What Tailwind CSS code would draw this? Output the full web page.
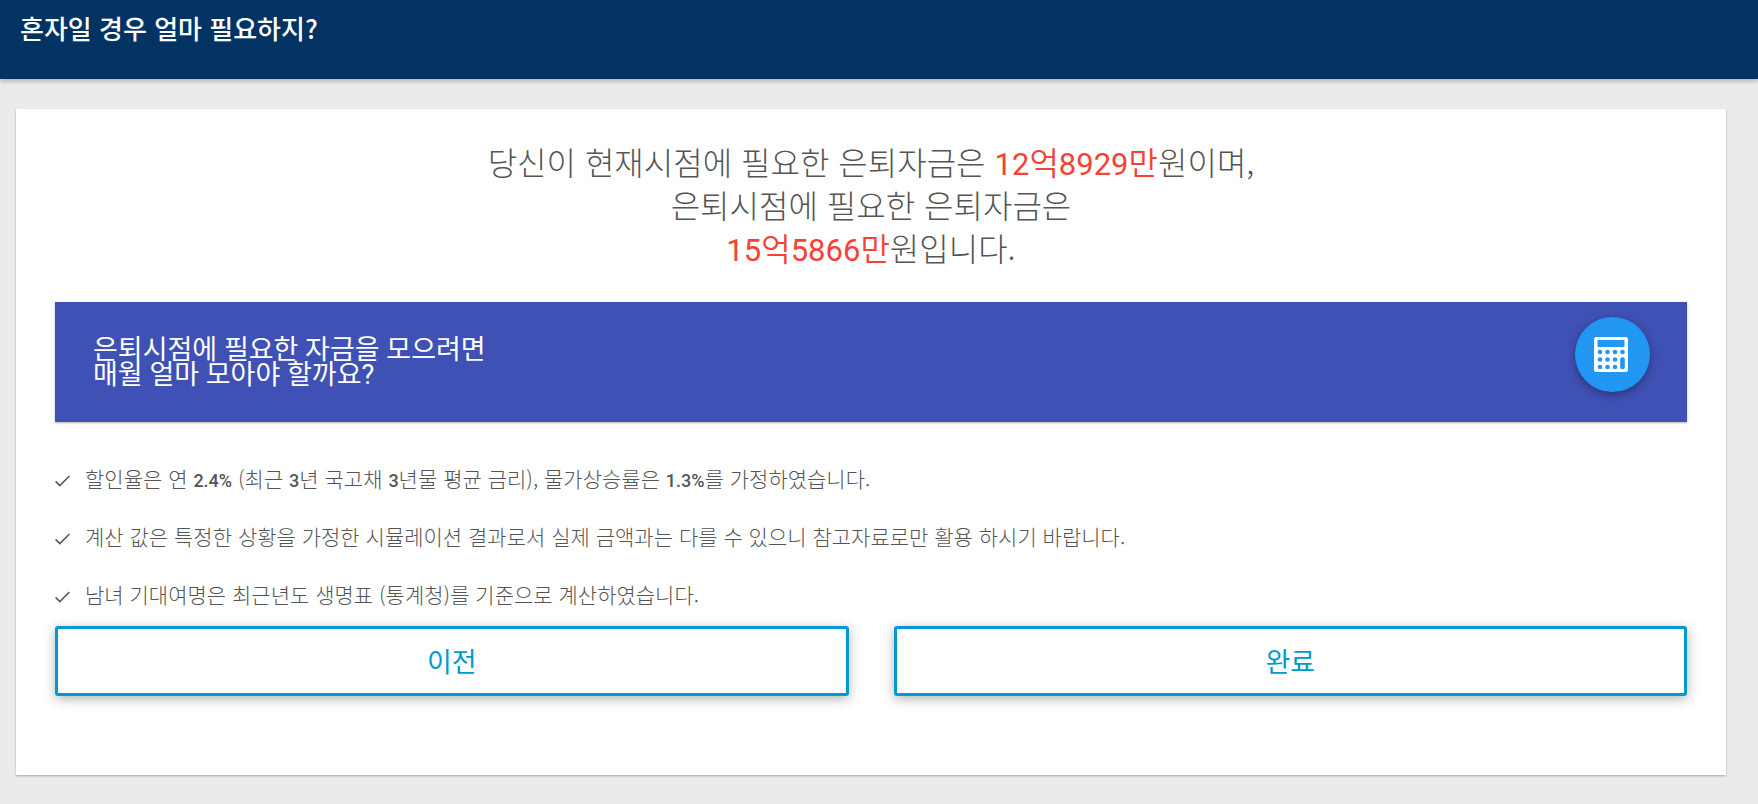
<!DOCTYPE html>
<html lang="ko">
<head>
<meta charset="utf-8">
<meta name="viewport" content="width=device-width, initial-scale=1">
<title>혼자일 경우 얼마 필요하지?</title>
<script src="https://cdn.jsdelivr.net/npm/@tailwindcss/browser@4"></script>
</head>
<body class="min-h-screen bg-[#ebebeb] font-['Noto_Sans_CJK_KR',sans-serif] text-[#555555]">
<header class="h-[79px] bg-[#033363] px-5 pt-1.5 text-white shadow-[0_2px_5px_rgba(0,0,0,0.26)]">
  <h1 class="text-[26px] leading-[44px] font-medium">혼자일 경우 얼마 필요하지?</h1>
</header>
<main class="mt-[30px] mr-8 mb-7 ml-4 bg-white px-[39px] pt-[31px] pb-[79px] shadow-[0_1px_2px_rgba(0,0,0,0.3)]">
  <p class="text-center text-[32px] leading-[43px] font-light">
    당신이 현재시점에 필요한 은퇴자금은 <span class="font-[350] text-[#f44336]"><span class="font-[Roboto] text-[31px] leading-none font-normal">12</span>억<span class="font-[Roboto] text-[31px] leading-none font-normal">8929</span>만</span>원이며,<br>
    은퇴시점에 필요한 은퇴자금은<br>
    <span class="font-[350] text-[#f44336]"><span class="font-[Roboto] text-[31px] leading-none font-normal">15</span>억<span class="font-[Roboto] text-[31px] leading-none font-normal">5866</span>만</span>원입니다.
  </p>
  <section class="mt-[33px] flex h-[120px] items-start justify-between bg-[#3f51b5] pr-[37px] pl-[38px] text-white shadow-[0_1px_2px_rgba(0,0,0,0.3)]">
    <h2 class="pt-9 font-[Roboto,'Noto_Sans_CJK_KR',sans-serif] text-[27px] leading-[25px] font-normal">은퇴시점에 필요한 자금을 모으려면<br>매월 얼마 모아야 할까요?</h2>
    <button type="button" aria-label="계산하기" class="mt-[15px] flex size-[75px] items-center justify-center rounded-full bg-[#2196f3] pr-[3px] shadow-[0_3px_10px_rgba(0,0,0,0.35)]">
      <svg class="h-[35px] w-[34px]" viewBox="0 0 34 35" aria-hidden="true">
        <rect width="34" height="35" rx="2.5" fill="#fff"/>
        <g fill="#2196f3">
          <rect x="3.5" y="3" width="27" height="7" rx="0.7"/>
          <circle cx="6" cy="15" r="2.3"/><circle cx="13.5" cy="15" r="2.3"/><circle cx="21" cy="15" r="2.3"/><circle cx="28.5" cy="15" r="2.3"/>
          <circle cx="6" cy="22.5" r="2.3"/><circle cx="13.5" cy="22.5" r="2.3"/><circle cx="21" cy="22.5" r="2.3"/>
          <circle cx="6" cy="30" r="2.3"/><circle cx="13.5" cy="30" r="2.3"/><circle cx="21" cy="30" r="2.3"/>
          <rect x="26.2" y="20.2" width="4.6" height="12" rx="2"/>
        </g>
      </svg>
    </button>
  </section>
  <ul class="mt-10 flex flex-col gap-[26px] text-[21px] leading-8 font-light">
    <li class="flex items-center gap-[15px]">
      <svg class="mt-1.5 h-3 w-[15px] shrink-0" viewBox="0 0 15 12" fill="none" stroke="#555" stroke-width="1.5" aria-hidden="true"><path d="M.6 6.4 4.8 10.6 14.4 1"/></svg>
      <span>할인율은 연 <span class="font-[Roboto] text-[18px] leading-none font-medium">2.4%</span> (최근 <span class="font-[Roboto] text-[18px] leading-none font-medium">3</span>년 국고채 <span class="font-[Roboto] text-[18px] leading-none font-medium">3</span>년물 평균 금리), 물가상승률은 <span class="font-[Roboto] text-[18px] leading-none font-medium">1.3%</span>를 가정하였습니다.</span>
    </li>
    <li class="flex items-center gap-[15px]">
      <svg class="mt-1.5 h-3 w-[15px] shrink-0" viewBox="0 0 15 12" fill="none" stroke="#555" stroke-width="1.5" aria-hidden="true"><path d="M.6 6.4 4.8 10.6 14.4 1"/></svg>
      <span>계산 값은 특정한 상황을 가정한 시뮬레이션 결과로서 실제 금액과는 다를 수 있으니 참고자료로만 활용 하시기 바랍니다.</span>
    </li>
    <li class="flex items-center gap-[15px]">
      <svg class="mt-1.5 h-3 w-[15px] shrink-0" viewBox="0 0 15 12" fill="none" stroke="#555" stroke-width="1.5" aria-hidden="true"><path d="M.6 6.4 4.8 10.6 14.4 1"/></svg>
      <span>남녀 기대여명은 최근년도 생명표 (통계청)를 기준으로 계산하였습니다.</span>
    </li>
  </ul>
  <div class="mt-4 grid grid-cols-2 gap-[45px] text-[27px] leading-none text-[#0099d0]">
    <button type="button" class="h-[70px] rounded-[3px] border-3 border-[#0099d0] bg-white pb-0.5 shadow-[0_3px_12px_rgba(0,0,0,0.3)]">이전</button>
    <button type="button" class="h-[70px] rounded-[3px] border-3 border-[#0099d0] bg-white pb-0.5 shadow-[0_3px_12px_rgba(0,0,0,0.3)]">완료</button>
  </div>
</main>
</body>
</html>
